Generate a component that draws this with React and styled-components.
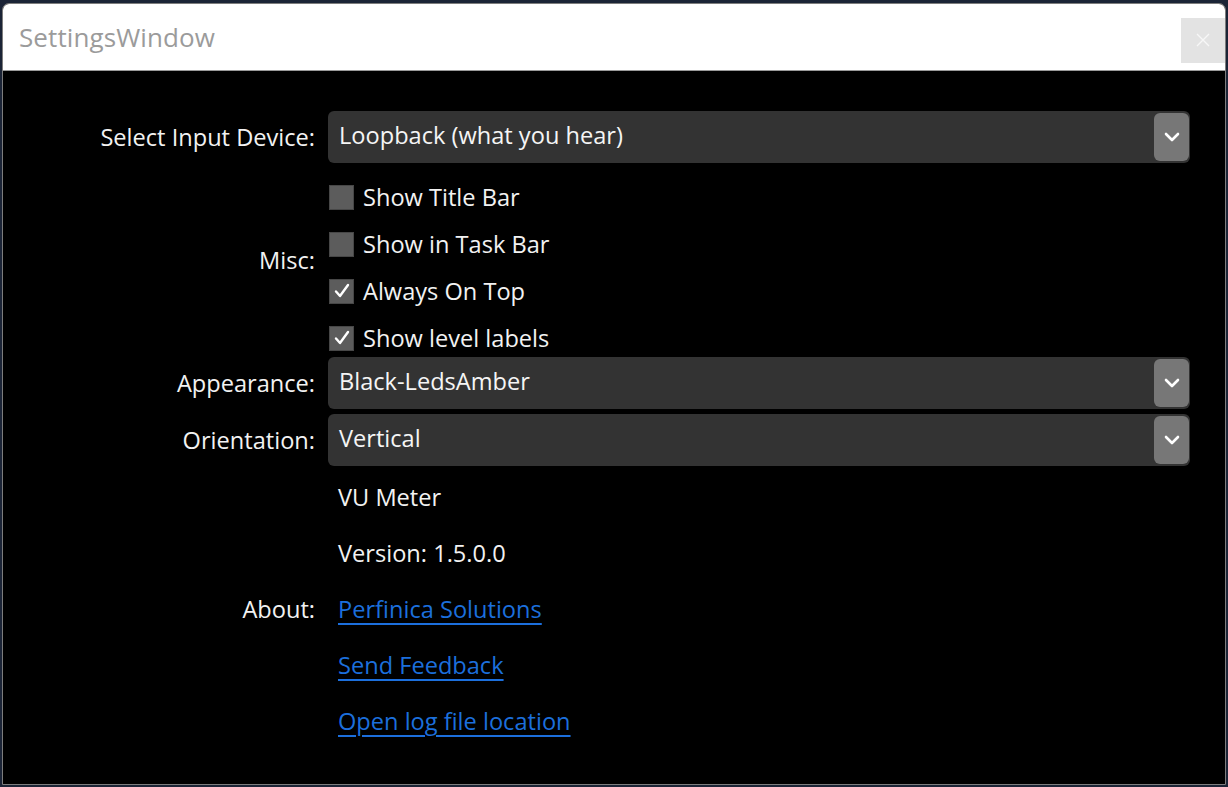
import React, { useState } from 'react';
import styled, { createGlobalStyle } from 'styled-components';

const GlobalStyle = createGlobalStyle`
  html, body {
    margin: 0;
    padding: 0;
    background: #1b2436;
    overflow: hidden;
  }
  body {
    font-family: "Open Sans", "Noto Sans", sans-serif;
  }
`;

const Desktop = styled.div`
  width: 1228px;
  height: 787px;
  padding: 3px 2px 2px 2px;
  box-sizing: border-box;
`;

const Window = styled.div`
  width: 100%;
  height: 100%;
  display: flex;
  flex-direction: column;
  border: 1px solid #7d7d7d;
  border-radius: 7px 7px 0 0;
  overflow: hidden;
  box-sizing: border-box;
  background: #000;
`;

const TitleBar = styled.div`
  height: 66px;
  flex-shrink: 0;
  display: flex;
  align-items: center;
  justify-content: space-between;
  background: #fff;
  border-bottom: 1px solid #9a9a9a;
  padding: 0 0 0 16px;
`;

const Title = styled.div`
  font-size: 26px;
  color: #9b9b9b;
  letter-spacing: 0.1px;
  margin-top: -1px;
`;

const CloseButton = styled.button`
  width: 44px;
  height: 45px;
  margin-top: 6px;
  border: none;
  background: #e3e3e3;
  display: flex;
  align-items: center;
  justify-content: center;
  padding: 0;
`;

const Content = styled.div`
  flex: 1;
  background: #000;
  padding-top: 40px;
`;

const Form = styled.div`
  display: grid;
  grid-template-columns: 312px 862px;
  column-gap: 13px;
  row-gap: 5px;
  align-items: center;
`;

const Label = styled.div`
  text-align: right;
  color: #f2f2f2;
  font-size: 23.6px;
`;

const Value = styled.div`
  color: #f2f2f2;
  font-size: 23.6px;
  height: 51px;
  display: flex;
  align-items: center;
  padding-left: 10px;
`;

const LinkText = styled.a`
  color: #1c6fdc;
  text-decoration: underline;
  text-underline-offset: 5px;
  text-decoration-thickness: 1.5px;
  cursor: pointer;
`;

const ComboBox = styled.div`
  height: 52px;
  display: flex;
  align-items: center;
  justify-content: space-between;
  background: #333333;
  border-radius: 6px;
  padding: 0 0 0 11px;
  box-sizing: border-box;
  color: #f5f5f5;
  font-size: 23.6px;
`;

const ComboText = styled.span`
  margin-top: -4px;
`;

const DropButton = styled.div`
  width: 35px;
  height: 48px;
  margin-right: 1px;
  border-radius: 6px;
  background: #777777;
  display: flex;
  align-items: center;
  justify-content: center;
`;

const CheckList = styled.div`
  display: flex;
  flex-direction: column;
  gap: 9px;
  padding-top: 10px;
  margin-bottom: -5px;
`;

const CheckRow = styled.label`
  height: 38px;
  display: flex;
  align-items: center;
  gap: 9px;
  color: #f2f2f2;
  font-size: 23.6px;
  cursor: pointer;
`;

const Box = styled.span`
  width: 25px;
  height: 25px;
  margin-left: 1px;
  box-sizing: border-box;
  background: #5c5c5c;
  border: 1px solid #474747;
  display: flex;
  align-items: center;
  justify-content: center;
`;

const Chevron = () => (
  <svg width="16" height="10" viewBox="0 0 16 10">
    <path d="M2 2 L8 8 L14 2" fill="none" stroke="#fff" strokeWidth="2.6" strokeLinecap="round" strokeLinejoin="round" />
  </svg>
);

const Tick = () => (
  <svg width="18" height="18" viewBox="0 0 18 18">
    <path d="M3 9.5 L7 14 L15 3" fill="none" stroke="#fff" strokeWidth="2.4" strokeLinecap="round" strokeLinejoin="round" />
  </svg>
);

const Combo = ({ value }) => (
  <ComboBox>
    <ComboText>{value}</ComboText>
    <DropButton><Chevron /></DropButton>
  </ComboBox>
);

const Check = ({ label, checked, onToggle }) => (
  <CheckRow onClick={onToggle}>
    <Box>{checked && <Tick />}</Box>
    <span>{label}</span>
  </CheckRow>
);

export default function App() {
  const [checks, setChecks] = useState({
    titleBar: false,
    taskBar: false,
    onTop: true,
    levels: true
  });

  const toggle = key => setChecks({ ...checks, [key]: !checks[key] });

  return (
    <>
      <GlobalStyle />
      <Desktop>
        <Window>
          <TitleBar>
            <Title>SettingsWindow</Title>
            <CloseButton>
              <svg width="16" height="16" viewBox="0 0 16 16">
                <path d="M2 2 L14 14 M14 2 L2 14" stroke="#f7f7f7" strokeWidth="1.4" />
              </svg>
            </CloseButton>
          </TitleBar>
          <Content>
            <Form>
              <Label>Select Input Device:</Label>
              <Combo value="Loopback (what you hear)" />

              <Label>Misc:</Label>
              <CheckList>
                <Check label="Show Title Bar" checked={checks.titleBar} onToggle={() => toggle('titleBar')} />
                <Check label="Show in Task Bar" checked={checks.taskBar} onToggle={() => toggle('taskBar')} />
                <Check label="Always On Top" checked={checks.onTop} onToggle={() => toggle('onTop')} />
                <Check label="Show level labels" checked={checks.levels} onToggle={() => toggle('levels')} />
              </CheckList>

              <Label>Appearance:</Label>
              <Combo value="Black-LedsAmber" />

              <Label>Orientation:</Label>
              <Combo value="Vertical" />

              <div />
              <Value>VU Meter</Value>

              <div />
              <Value>Version: 1.5.0.0</Value>

              <Label>About:</Label>
              <Value><LinkText>Perfinica Solutions</LinkText></Value>

              <div />
              <Value><LinkText>Send Feedback</LinkText></Value>

              <div />
              <Value><LinkText>Open log file location</LinkText></Value>
            </Form>
          </Content>
        </Window>
      </Desktop>
    </>
  );
}
